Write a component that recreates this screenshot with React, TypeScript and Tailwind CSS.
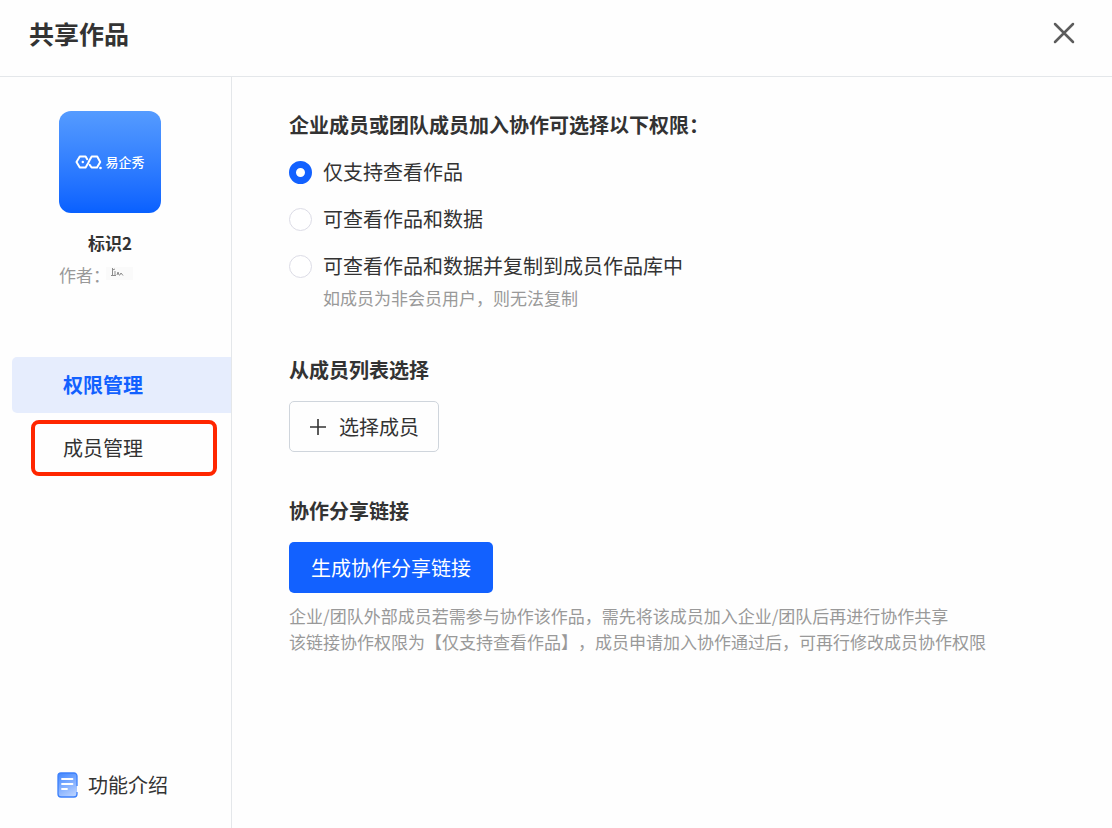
import { useState } from 'react';

const options = [
  { id: 'view', label: '仅支持查看作品' },
  { id: 'data', label: '可查看作品和数据' },
  { id: 'copy', label: '可查看作品和数据并复制到成员作品库中' },
];

function BrandMark() {
  return (
    <svg width="27" height="15" viewBox="0 0 27 15" fill="none" stroke="#fff" strokeWidth="2" strokeLinejoin="round" strokeLinecap="round" aria-hidden="true">
      <path d="M12.200 4.200 10.600 1.500H4.800L1.500 7l3.300 5.500h5.800L13.200 8l1.200-2.500 2.300-4h5.500L25.200 7l-3.200 5.500h-5.400L14.700 9.800" />
      <circle cx="7.800" cy="7" r="1.200" fill="#fff" stroke="none" />
      <circle cx="25.500" cy="13" r="1.300" fill="#fff" stroke="none" />
    </svg>
  );
}

function DocIcon() {
  return (
    <svg width="21" height="26" viewBox="0 0 21 26" fill="none" aria-hidden="true">
      <defs>
        <linearGradient id="doc-fill" x1="3" y1="0" x2="17" y2="26" gradientUnits="userSpaceOnUse">
          <stop stopColor="#3f85ff" />
          <stop offset="1" stopColor="#c2d7ff" />
        </linearGradient>
      </defs>
      <rect x="1" y="1" width="19" height="24" rx="3" fill="url(#doc-fill)" />
      <path d="M20 14V4a3 3 0 0 0-3-3H4a3 3 0 0 0-3 3v18a3 3 0 0 0 3 3h13a3 3 0 0 0 3-3v-2" stroke="#3c80fb" strokeWidth="1.3" />
      <path d="M5 7h10.500M5 12h10.500M5 17h5" stroke="#fff" strokeWidth="1.8" strokeLinecap="round" />
    </svg>
  );
}

function AuthorScribble() {
  return (
    <svg width="27" height="13" viewBox="0 0 27 13" fill="none" aria-hidden="true">
      <rect width="27" height="13" fill="#fafafa" />
      <path d="M6.500 1v7M6.500 3l2.500-1M5 8.500h5M9 4v4M11 8l1-3 1 3M13.500 8.500l1.500-2.500 2 2.500" stroke="#8c8c8c" strokeWidth="1" />
    </svg>
  );
}

export default function App() {
  const [permission, setPermission] = useState('view');

  return (
    <div className="flex min-h-screen flex-col bg-[#fefefe] font-['Noto_Sans_CJK_SC',sans-serif] text-[20px] leading-[28px] text-[#333] [text-spacing-trim:space-all]">
      <header className="flex h-[77px] items-center justify-between border-b border-[#e4e7ea] pr-[37px] pb-[10px] pl-[29px]">
        <h1 className="text-[25px] font-bold">共享作品</h1>
        <button type="button" aria-label="关闭" className="flex text-[#5c5c5c]">
          <svg width="22" height="22" viewBox="0 0 22 22" fill="none" stroke="currentColor" strokeWidth="2.500" strokeLinecap="round">
            <path d="M2 2l18 18M20 2 2 20" />
          </svg>
        </button>
      </header>

      <div className="flex flex-1">
        <aside className="flex w-[232px] shrink-0 flex-col border-r border-[#e4e7ea] pt-[34px]">
          <div className="ml-[59px] flex w-[102px] flex-col">
            <div className="flex h-[102px] items-center justify-center gap-[3px] rounded-[12px] bg-linear-to-b from-[#559bff] to-[#0860ff] text-white">
              <BrandMark />
              <span className="text-[13px] leading-[16px] font-medium">易企秀</span>
            </div>
            <h2 className="mt-[17px] text-center text-[17px] leading-[26px] font-bold">标识2</h2>
            <p className="mt-[6px] flex items-start text-[17px] leading-[26px] whitespace-nowrap text-[#999]">
              作者：
              <span className="-ml-[4px] flex pt-[5px]"><AuthorScribble /></span>
            </p>
          </div>

          <nav className="mt-[69px] flex flex-col gap-[7px]">
            <button type="button" aria-current="page" className="ml-[12px] h-[56px] rounded-l-[5px] bg-[#e6edfd] pl-[51px] text-left font-bold text-[#1261ff]">
              权限管理
            </button>
            <button type="button" className="mr-[14px] ml-[31px] h-[56px] rounded-[8px] border-4 border-[#ff2600] pl-[28px] text-left">
              成员管理
            </button>
          </nav>

          <a href="#intro" className="mt-auto mb-[29px] ml-[57px] flex items-center gap-[10px]">
            <DocIcon />
            功能介绍
          </a>
        </aside>

        <main className="flex flex-1 flex-col items-start gap-[45px] px-[57px] pt-[34px]">
          <fieldset>
            <legend className="mb-[19px] font-bold">企业成员或团队成员加入协作可选择以下权限：</legend>
            <div className="flex flex-col gap-[19px]">
              {options.map((option) => (
                <label key={option.id} className="flex items-center gap-[11px]">
                  <input
                    type="radio"
                    name="permission"
                    checked={permission === option.id}
                    onChange={() => setPermission(option.id)}
                    className="size-[23px] shrink-0 appearance-none rounded-full border border-[#dcdce6] bg-white checked:border-[7px] checked:border-[#1261ff]"
                  />
                  {option.label}
                </label>
              ))}
            </div>
            <p className="mt-[5px] ml-[34px] text-[17px] leading-[26px] text-[#999]">如成员为非会员用户，则无法复制</p>
          </fieldset>

          <section>
            <h2 className="font-bold">从成员列表选择</h2>
            <button type="button" className="mt-[17px] flex h-[51px] items-center gap-[12px] rounded-[5px] border border-[#cfd5dc] px-[19px]">
              <svg width="18" height="18" viewBox="0 0 18 18" fill="none" stroke="currentColor" strokeWidth="1.600" aria-hidden="true">
                <path d="M9 1v16M1 9h16" />
              </svg>
              选择成员
            </button>
          </section>

          <section>
            <h2 className="font-bold">协作分享链接</h2>
            <button type="button" className="mt-[17px] h-[51px] rounded-[5px] bg-[#1261ff] px-[22px] text-white">
              生成协作分享链接
            </button>
            <p className="mt-[10px] text-[17px] leading-[26px] text-[#999]">
              企业/团队外部成员若需参与协作该作品，需先将该成员加入企业/团队后再进行协作共享
              <br />
              该链接协作权限为【仅支持查看作品】，成员申请加入协作通过后，可再行修改成员协作权限
            </p>
          </section>
        </main>
      </div>
    </div>
  );
}
